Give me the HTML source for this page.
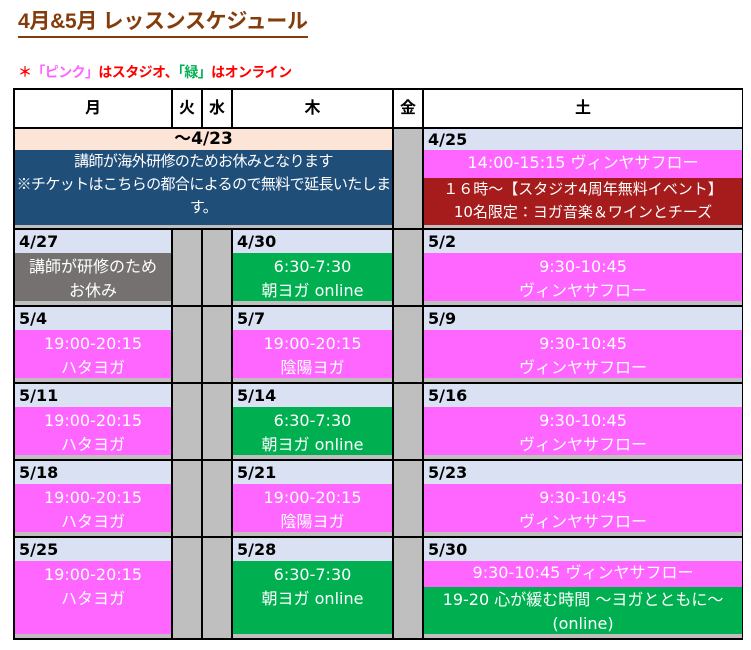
<!DOCTYPE html>
<html><head><meta charset="utf-8"><style>
body{margin:0;width:751px;height:650px;background:#fff;position:relative;overflow:hidden;font-family:"Liberation Sans","Noto Sans CJK JP",sans-serif}
div{position:absolute;box-sizing:border-box}
.t{left:18px;top:8px;font-size:21px;font-weight:bold;color:#843C0C;border-bottom:2px solid #843C0C;line-height:28px;letter-spacing:-0.3px}
.s{left:18px;top:62px;font-size:14px;font-weight:bold;color:#f00;line-height:20px;letter-spacing:-0.6px}
.tb{left:13px;top:88px;width:730px;height:552px;background:#000}
.h{background:#fff;font-weight:bold;font-size:16px;text-align:center;line-height:37px;color:#000}
.g{background:#bfbfbf}
.d{background:#d9e1f2;font-weight:bold;line-height:23px;padding-left:4px;color:#000;font-family:"DejaVu Sans","Noto Sans CJK JP",sans-serif;font-size:16px}
.b{color:#fff;font-size:16px;line-height:24px;text-align:center;padding-top:2px;font-family:"DejaVu Sans","Noto Sans CJK JP",sans-serif}
.p{background:#ff66ff}.gr{background:#00b050}
</style></head><body>
<div class="t">4月&amp;5月 レッスンスケジュール</div>
<div class="s">＊<span style="color:#ff66ff">「ピンク」</span>はスタジオ、<span style="color:#00b050">「緑」</span>はオンライン</div>
<div class="tb"></div>
<div class="h" style="left:15px;top:90px;width:156px;height:37px">月</div>
<div class="h" style="left:173px;top:90px;width:28px;height:37px">火</div>
<div class="h" style="left:203px;top:90px;width:28px;height:37px">水</div>
<div class="h" style="left:233px;top:90px;width:159px;height:37px">木</div>
<div class="h" style="left:394px;top:90px;width:28px;height:37px">金</div>
<div class="h" style="left:424px;top:90px;width:318px;height:37px">土</div>
<div class="g" style="left:15px;top:129px;width:377px;height:99px"></div>
<div style="left:15px;top:129px;width:377px;height:21px;background:#fce4d6;text-align:center;font-weight:bold;font-size:17px;line-height:21px;font-family:'DejaVu Sans','Noto Sans CJK JP',sans-serif">〜4/23</div>
<div class="b" style="left:15px;top:150px;width:377px;height:75px;background:#1f4e79;padding-top:0;line-height:23px;font-size:15px;letter-spacing:-0.6px;white-space:nowrap;font-family:'Liberation Sans','Noto Sans CJK JP',sans-serif">講師が海外研修のためお休みとなります<br>※チケットはこちらの都合によるので無料で延長いたしま<br>す。</div>
<div class="g" style="left:394px;top:129px;width:28px;height:99px"></div>
<div class="g" style="left:424px;top:129px;width:318px;height:99px"></div>
<div class="d" style="left:424px;top:129px;width:318px;height:21px;line-height:21px">4/25</div>
<div class="b p" style="left:424px;top:150px;width:318px;height:28px;padding-top:1px">14:00-15:15 ヴィンヤサフロー</div>
<div class="b" style="left:424px;top:178px;width:318px;height:47px;background:#a61c1c;padding-top:0;line-height:23px;font-size:15px">１６時〜【スタジオ4周年無料イベント】<br>10名限定：ヨガ音楽＆ワインとチーズ</div>
<div id="rows"></div>
<script>
var rows=[[230,305],[307,382],[384,459],[461,536],[538,638]];
var data=[
[["4/27","#757171","講師が研修のため<br>お休み"],["4/30","#00b050","6:30-7:30<br>朝ヨガ online"],["5/2","#ff66ff","9:30-10:45<br>ヴィンヤサフロー"]],
[["5/4","#ff66ff","19:00-20:15<br>ハタヨガ"],["5/7","#ff66ff","19:00-20:15<br>陰陽ヨガ"],["5/9","#ff66ff","9:30-10:45<br>ヴィンヤサフロー"]],
[["5/11","#ff66ff","19:00-20:15<br>ハタヨガ"],["5/14","#00b050","6:30-7:30<br>朝ヨガ online"],["5/16","#ff66ff","9:30-10:45<br>ヴィンヤサフロー"]],
[["5/18","#ff66ff","19:00-20:15<br>ハタヨガ"],["5/21","#ff66ff","19:00-20:15<br>陰陽ヨガ"],["5/23","#ff66ff","9:30-10:45<br>ヴィンヤサフロー"]],
[["5/25","#ff66ff","19:00-20:15<br>ハタヨガ"],["5/28","#00b050","6:30-7:30<br>朝ヨガ online"],["5/30","",""]]
];
var cols=[[15,156],[233,159],[424,318]];
var grays=[[173,28],[203,28],[394,28]];
var h="";
rows.forEach(function(r,i){
 var T=r[0],B=r[1];
 grays.concat(cols).forEach(function(c){h+='<div class="g" style="left:'+c[0]+'px;top:'+T+'px;width:'+c[1]+'px;height:'+(B-T)+'px"></div>';});
 data[i].forEach(function(d,j){
  var c=cols[j];
  h+='<div class="d" style="left:'+c[0]+'px;top:'+T+'px;width:'+c[1]+'px;height:23px">'+d[0]+'</div>';
  if(d[1]) h+='<div class="b" style="left:'+c[0]+'px;top:'+(T+23)+'px;width:'+c[1]+'px;height:'+(B-T-27)+'px;background:'+d[1]+'">'+d[2]+'</div>';
  else {
   h+='<div class="b p" style="left:'+c[0]+'px;top:'+(T+23)+'px;width:'+c[1]+'px;height:26px;padding-top:0">9:30-10:45 ヴィンヤサフロー</div>';
   h+='<div class="b gr" style="left:'+c[0]+'px;top:'+(T+49)+'px;width:'+c[1]+'px;height:'+(B-T-53)+'px;padding-top:1px">19-20 心が緩む時間 〜ヨガとともに〜<br>(online)</div>';
  }
 });
});
document.getElementById("rows").outerHTML=h;
</script>
</body></html>
